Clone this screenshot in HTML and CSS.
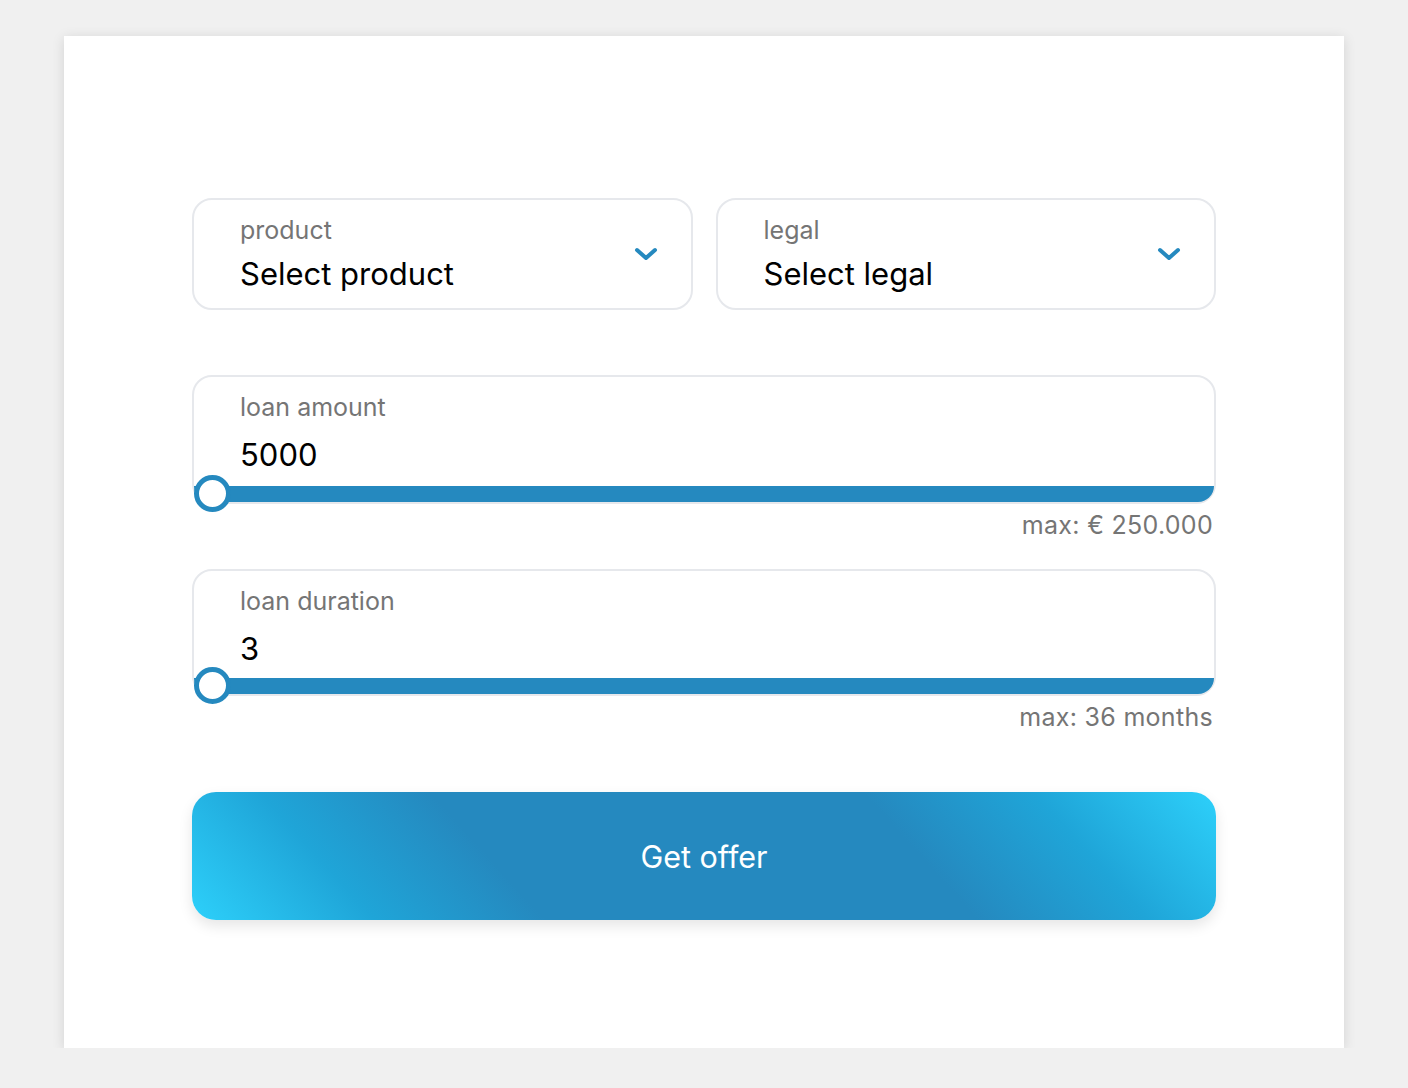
FILE: index.html
```html
<!DOCTYPE html>
<html lang="en">
<head>
<meta charset="utf-8">
<title>Loan offer</title>
<link rel="stylesheet" href="styles.css">
</head>
<body>
<main class="card">
  <div class="select-row">
    <div class="select">
      <div class="select-text">
        <span class="field-label">product</span>
        <span class="select-value">Select product</span>
      </div>
      <svg class="chevron" width="24" height="14" viewBox="0 0 24 14"><path d="M3 3 L12 11 L21 3" fill="none" stroke="#2589bf" stroke-width="4" stroke-linecap="round" stroke-linejoin="round"/></svg>
    </div>
    <div class="select">
      <div class="select-text">
        <span class="field-label">legal</span>
        <span class="select-value">Select legal</span>
      </div>
      <svg class="chevron" width="24" height="14" viewBox="0 0 24 14"><path d="M3 3 L12 11 L21 3" fill="none" stroke="#2589bf" stroke-width="4" stroke-linecap="round" stroke-linejoin="round"/></svg>
    </div>
  </div>

  <div class="range-group range-amount">
    <div class="range-field">
      <span class="field-label">loan amount</span>
      <span class="range-value">5000</span>
      <div class="track"></div>
      <div class="thumb"></div>
    </div>
    <div class="range-max">max: € 250.000</div>
  </div>

  <div class="range-group range-duration">
    <div class="range-field">
      <span class="field-label">loan duration</span>
      <span class="range-value">3</span>
      <div class="track"></div>
      <div class="thumb"></div>
    </div>
    <div class="range-max">max: 36 months</div>
  </div>

  <button class="offer-btn" type="button">Get offer</button>
</main>
</body>
</html>
```

FILE: styles.css
```css
* { box-sizing: border-box; }

html, body {
  margin: 0;
  padding: 0;
}

body {
  background: #f0f0f0;
  font-family: Inter, "Noto Sans", "Liberation Sans", sans-serif;
  padding-top: 36px;
}

.card {
  width: 1280px;
  height: 1012px;
  margin: 0 auto;
  background: #ffffff;
  box-shadow: 0 2px 12px rgba(0, 0, 0, 0.12);
  padding: 162px 128px 0;
  display: flex;
  flex-direction: column;
}

.select-row {
  display: flex;
  gap: 23px;
}

.select {
  flex: 1;
  height: 112px;
  border: 2px solid #e6e8ec;
  border-radius: 20px;
  display: flex;
  align-items: center;
  justify-content: space-between;
  padding: 0 33px 0 46px;
}

.select-text {
  display: flex;
  flex-direction: column;
}

.field-label {
  font-size: 25px;
  line-height: 28px;
  color: #757575;
}

.select-value {
  font-size: 31px;
  line-height: 38px;
  color: #000;
  margin-top: 11px;
}

.chevron {
  display: block;
}

.range-amount {
  margin-top: 65px;
}

.range-duration {
  margin-top: 30px;
}

.range-field {
  position: relative;
  height: 129px;
  border: 2px solid #e6e8ec;
  border-radius: 20px;
  padding: 16px 0 0 46px;
  display: flex;
  flex-direction: column;
}

.range-duration .range-field {
  height: 127px;
}

.range-value {
  font-size: 31px;
  line-height: 38px;
  color: #000;
  margin-top: 15px;
}

.track {
  position: absolute;
  left: 0;
  right: 0;
  bottom: 0;
  height: 16px;
  background: #2589bf;
  border-radius: 0 0 18px 18px;
}

.thumb {
  position: absolute;
  left: 0;
  bottom: -10px;
  width: 37px;
  height: 37px;
  border-radius: 50%;
  background: #fff;
  border: 5px solid #2589bf;
}

.range-max {
  text-align: right;
  font-size: 25px;
  line-height: 28px;
  letter-spacing: 0.3px;
  color: #757575;
  margin-top: 7px;
  padding-right: 3px;
}

.offer-btn {
  margin-top: 61px;
  height: 128px;
  width: 100%;
  border: none;
  border-radius: 24px;
  background: linear-gradient(48deg, #2dd0fa 0%, #1fa5d8 16%, #2589bf 31%, #2589bf 69%, #1fa5d8 84%, #2dd0fa 100%);
  box-shadow: 0 6px 14px rgba(0, 0, 0, 0.10);
  color: #ffffff;
  font-family: Inter, "Noto Sans", "Liberation Sans", sans-serif;
  font-size: 30.5px;
  cursor: pointer;
}
```
